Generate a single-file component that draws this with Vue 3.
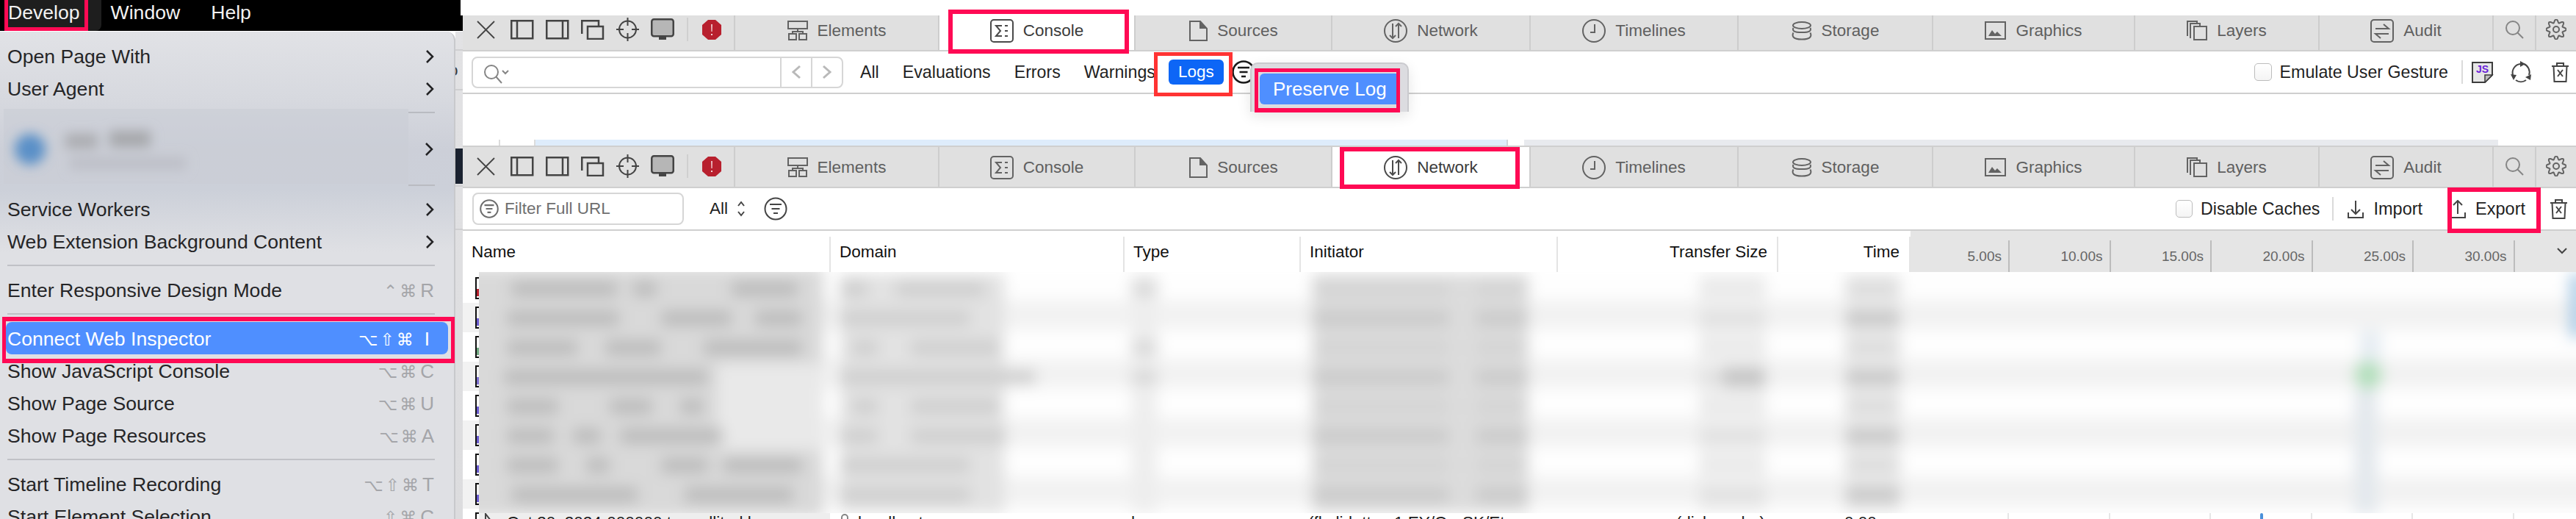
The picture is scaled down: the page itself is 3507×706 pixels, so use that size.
<script setup>
const menuA = ['Open Page With', 'User Agent']
const menuB = ['Service Workers', 'Web Extension Background Content']
const menuC = [
  { t: 'Connect Web Inspector', k: '⌥⇧⌘', l: 'I', on: true },
  { t: 'Show JavaScript Console', k: '⌥⌘', l: 'C' },
  { t: 'Show Page Source', k: '⌥⌘', l: 'U' },
  { t: 'Show Page Resources', k: '⌥⌘', l: 'A' },
]
const menuD = [
  { t: 'Start Timeline Recording', k: '⌥⇧⌘', l: 'T' },
  { t: 'Start Element Selection', k: '⇧⌘', l: 'C' },
]
const tabs = [
  { n: 'Elements', i: 'elements', w: 28, h: 27 },
  { n: 'Console', i: 'console', w: 32, h: 32 },
  { n: 'Sources', i: 'sources', w: 26, h: 28 },
  { n: 'Network', i: 'network', w: 32, h: 32 },
  { n: 'Timelines', i: 'timelines', w: 32, h: 32 },
  { n: 'Storage', i: 'storage', w: 28, h: 26 },
  { n: 'Graphics', i: 'graphics', w: 29, h: 25 },
  { n: 'Layers', i: 'layers', w: 28, h: 27 },
  { n: 'Audit', i: 'audit', w: 32, h: 32 },
]
const ticks = ['5.00s', '10.00s', '15.00s', '20.00s', '25.00s', '30.00s']
const fileColors = ['#b8202e', '#6a5bd0', '#6fa77f', '#7c6fd0', '#6a5bd0', '#6a5bd0', '#6a5bd0', '#6a5bd0', '#6a5bd0']

const gear = (() => {
  const pts = []
  for (let i = 0; i < 96; i++) {
    const a = (i / 96) * Math.PI * 2
    const r = 11.5 + 2.2 * Math.cos(8 * a)
    pts.push((14 + r * Math.sin(a)).toFixed(2) + ' ' + (14 - r * Math.cos(a)).toFixed(2))
  }
  return 'M' + pts.join('L') + 'Z'
})()

// Blurred table content, in page coordinates
const centre = (i) => 393 + 40 * i
const bar = (x1, x2, i, fill, h = 20) => ({ x: x1, width: x2 - x1, y: centre(i) - h / 2, height: h, fill })
const nameRuns = [
  [[696, 840], [862, 894], [996, 1086]],
  [[690, 843], [900, 996], [1028, 1092]],
  [[690, 786], [824, 900], [958, 1092]],
  [[686, 964]],
  [[690, 760], [830, 888], [926, 958]],
  [[690, 754], [780, 818], [844, 984]],
  [[690, 760], [798, 830], [900, 964], [984, 1092]],
  [[696, 868], [932, 1080]],
]
const domainRuns = [
  [[1143, 1180], [1220, 1340]], [[1143, 1320]], [[1160, 1195], [1240, 1360]], [[1143, 1410]],
  [[1160, 1195], [1240, 1360]], [[1143, 1195], [1240, 1370]], [[1143, 1320]], [[1143, 1320]],
]
const blurRects = []
for (let i = 0; i < 9; i++) {
  blurRects.push({ x: 600, width: 2960, y: 372 + 40 * i - 4, height: 40, fill: i % 2 ? '#f2f2f2' : '#fefefe' })
}
blurRects.push({ x: 600, width: 522, y: 364, height: 340, fill: '#d9d9d9' })
blurRects.push({ x: 977, width: 145, y: 495, height: 117, fill: '#e9e9e9' })
blurRects.push({ x: 1143, width: 225, y: 372, height: 326, fill: '#e2e2e2' })
blurRects.push({ x: 1540, width: 36, y: 372, height: 326, fill: '#eeeeee' })
blurRects.push({ x: 1786, width: 295, y: 372, height: 326, fill: '#dcdcdc' })
blurRects.push({ x: 2313, width: 91, y: 372, height: 326, fill: '#efefef' })
blurRects.push({ x: 2512, width: 75, y: 372, height: 326, fill: '#e8e8e8' })
nameRuns.forEach((row, i) => row.forEach(([a, b]) => blurRects.push(bar(a, b, i, '#b9b9b9'))))
domainRuns.forEach((row, i) => row.forEach(([a, b]) => blurRects.push(bar(a, b, i, '#cecece'))))
;[0, 2, 3].forEach((i) => blurRects.push(bar(1540, 1576, i, '#d8d8d8')))
for (let i = 0; i < 8; i++) {
  const strong = i % 2 === 1
  blurRects.push(bar(1786, 1972, i, strong ? '#c9c9c9' : '#d4d4d4'))
  blurRects.push(bar(2010, 2081, i, strong ? '#c9c9c9' : '#d4d4d4'))
  blurRects.push(bar(2313, 2404, i, strong ? '#e0e0e0' : '#eaeaea'))
  blurRects.push(bar(2512, 2587, i, strong ? '#c6c6c6' : '#dddddd'))
}
blurRects.push(bar(2345, 2404, 3, '#c6c6c6', 28))
blurRects.push({ x: 3212, width: 30, y: 450, height: 40, fill: '#e6edf3' })
blurRects.push({ x: 3205, width: 32, y: 530, height: 170, fill: '#e3e8ed' })
blurRects.push({ x: 3498, width: 20, y: 372, height: 88, fill: '#a5cbe6' })
</script>

<template>
  <div class="page">
    <svg class="defs" width="0" height="0" aria-hidden="true">
      <defs>
        <g id="i-elements"><rect x="1" y="1" width="26" height="10" /><rect x="2" y="18" width="10" height="8" /><rect x="16" y="18" width="10" height="8" /><path d="M14 11v4M7 18v-3h14v3" /></g>
        <g id="i-console"><rect x="1" y="1" width="30" height="30" rx="4" /><path d="M16 9H8l6 7-6 7h8M20 9h4M20 16h4M20 23h4" /></g>
        <g id="i-sources"><path d="M2 1h14l9 10v16H2z" /><path d="M15 1v10h10z" fill="currentColor" stroke="none" /></g>
        <g id="i-network"><circle cx="16" cy="16" r="15" /><path d="M12 6v20M8 22l4 4 4-4M20 26V6M16 10l4-4 4 4" /></g>
        <g id="i-timelines"><circle cx="16" cy="16" r="15" /><path d="M17 7v11h-6" /></g>
        <g id="i-storage"><ellipse cx="14" cy="5.5" rx="12" ry="4.5" /><path d="M2.5 9c-1.5 3.500 0 6 11.500 6s13-2.500 11.500-6M2.500 15.500c-2 4 -1.500 9 11.500 9s13.500-5 11.500-9" /></g>
        <g id="i-graphics"><rect x="1" y="1" width="27" height="23" /><path d="M5 20l5-8 4 5 3-3 6 6z" fill="currentColor" stroke="none" /></g>
        <g id="i-layers"><rect x="10" y="8" width="17" height="18" /><path d="M6 23H5V4h13v4M2 20H1V1h13v3" /></g>
        <g id="i-audit"><rect x="1" y="1" width="30" height="30" rx="4" /><path d="M7 13h18l-7-6M25 20H7l7 6" /></g>
        <g id="i-close"><path d="M1 1l23 23M24 1L1 24" /></g>
        <g id="i-dockl"><rect x="1.250" y="1.250" width="29" height="24" /><path d="M9 1v25" /></g>
        <g id="i-dockr"><rect x="1.250" y="1.250" width="29" height="24" /><path d="M23 1v25" /></g>
        <g id="i-undock"><rect x="9" y="9" width="21" height="17" /><path d="M1.250 19V1.250H24V9" /></g>
        <g id="i-target"><circle cx="15.500" cy="16" r="11.500" /><path d="M15.500 0v11M15.500 21v11M0 16h10M21 16h10" /></g>
        <g id="i-monitor"><rect x="1.250" y="1.250" width="29.500" height="23" rx="3" fill="#b6b6b6" /><path d="M11 24h10v5H11z" fill="currentColor" stroke="none" /></g>
        <g id="i-error"><path d="M8 0h10l8 7v13l-8 7H8l-8-7V7z" fill="#b8202e" stroke="none" /><path d="M12.300 6h1.400l-.2 10h-1zM12.200 19h1.600v2h-1.600z" fill="#fff" stroke="none" /></g>
        <g id="i-search"><circle cx="10" cy="10" r="9" /><path d="M16 16l8 8" /></g>
        <g id="i-gear"><path :d="gear" /><circle cx="14" cy="14" r="4" /></g>
        <g id="i-filter"><circle cx="16" cy="16" r="14.500" /><path d="M8 10h16M10.500 16h11M13 22h6" /></g>
        <g id="i-trash"><path d="M1 5h23M8 5V1h9v4M3.500 5l1 21h16l1-21M9 10l7 9M16 10l-7 9" /></g>
        <g id="i-import"><path d="M11 1v18M5 13l6 6 6-6M1 17v7h20v-7" /></g>
        <g id="i-export"><path d="M11 19V1M5 7l6-6 6 6M1 17v7h20v-7" /></g>
        <g id="i-chev"><path d="M2 2l8 8-8 8" /></g>
      </defs>
    </svg>

    <aside class="left">
      <header class="menubar">
        <span class="mb-item mb-on">Develop</span>
        <span class="mb-item">Window</span>
        <span class="mb-item">Help</span>
      </header>
      <div class="menu-wrap">
        <nav class="menu">
          <div v-for="t in menuA" :key="t" class="row">
            <span>{{ t }}</span>
            <svg class="ico chev" width="12" height="20" viewBox="0 0 12 20"><use href="#i-chev" /></svg>
          </div>
          <div class="account">
            <svg class="account-blur" width="551" height="102" viewBox="0 0 551 102">
              <defs>
                <filter id="acc" x="-20" y="-20" width="600" height="150" filterUnits="userSpaceOnUse"><feGaussianBlur stdDeviation="8" /></filter>
              </defs>
              <rect width="551" height="102" fill="#cacdd6" fill-opacity=".6" />
              <g filter="url(#acc)">
                <circle cx="36" cy="55" r="21" fill="#5a90c8" />
                <rect x="84" y="34" width="44" height="20" fill="#abacb0" />
                <rect x="144" y="30" width="56" height="22" fill="#a6a7ab" />
                <rect x="90" y="66" width="158" height="16" fill="#bcbec6" />
              </g>
            </svg>
            <div class="account-side">
              <i class="side-sep"></i>
              <svg class="ico chev" width="12" height="20" viewBox="0 0 12 20"><use href="#i-chev" /></svg>
              <i class="side-sep"></i>
            </div>
          </div>
          <div v-for="t in menuB" :key="t" class="row">
            <span>{{ t }}</span>
            <svg class="ico chev" width="12" height="20" viewBox="0 0 12 20"><use href="#i-chev" /></svg>
          </div>
          <i class="sep"></i>
          <div class="row">
            <span>Enter Responsive Design Mode</span>
            <span class="keys">⌃⌘<b>R</b></span>
          </div>
          <i class="sep"></i>
          <div v-for="m in menuC" :key="m.t" class="row" :class="{ 'row-on': m.on }">
            <span>{{ m.t }}</span>
            <span class="keys">{{ m.k }}<b>{{ m.l }}</b></span>
          </div>
          <i class="sep"></i>
          <div v-for="m in menuD" :key="m.t" class="row">
            <span>{{ m.t }}</span>
            <span class="keys">{{ m.k }}<b>{{ m.l }}</b></span>
          </div>
        </nav>
        <div class="strip"><span>o</span></div>
      </div>
    </aside>

    <main class="tools-area">
      <div class="top-white"></div>

      <!-- Console inspector -->
      <div class="clip">
        <div class="tabbar">
          <div class="tools">
            <svg class="ico dark close" width="25" height="25" viewBox="0 0 25 25"><use href="#i-close" /></svg>
            <svg class="ico dark thick" width="32" height="27" viewBox="0 0 32 27"><use href="#i-dockl" /></svg>
            <svg class="ico dark thick" width="32" height="27" viewBox="0 0 32 27"><use href="#i-dockr" /></svg>
            <svg class="ico dark thick" width="32" height="27" viewBox="0 0 32 27"><use href="#i-undock" /></svg>
            <svg class="ico dark" width="31" height="32" viewBox="0 0 31 32"><use href="#i-target" /></svg>
            <svg class="ico dark thick" width="32" height="30" viewBox="0 0 32 30"><use href="#i-monitor" /></svg>
            <i class="tool-sep"></i>
            <svg class="ico" width="26" height="27" viewBox="0 0 26 27"><use href="#i-error" /></svg>
          </div>
          <div v-for="t in tabs" :key="t.n" class="tab" :class="{ 'tab-on': t.n === 'Console' }">
            <svg class="ico" :width="t.w" :height="t.h" :viewBox="`0 0 ${t.w} ${t.h}`"><use :href="`#i-${t.i}`" /></svg>
            <span>{{ t.n }}</span>
          </div>
          <div class="tab tab-mini"><svg class="ico gray" width="25" height="25" viewBox="0 0 25 25"><use href="#i-search" /></svg></div>
          <div class="tab tab-mini last"><svg class="ico" width="28" height="28" viewBox="0 0 28 28"><use href="#i-gear" /></svg></div>
        </div>
      </div>
      <div class="rule"></div>
      <div class="toolbar">
        <div class="searchbox">
          <svg class="ico gray search-i" width="34" height="26" viewBox="0 0 34 26"><circle cx="10" cy="10" r="9" /><path d="M16 16l8 9M25 8l4 4 4-4" /></svg>
          <span class="pager"><svg class="ico pale" width="14" height="20" viewBox="0 0 14 20"><path d="M12 2l-9 8 9 8" stroke-width="3" /></svg></span>
          <span class="pager"><svg class="ico pale" width="14" height="20" viewBox="0 0 14 20"><path d="M2 2l9 8-9 8" stroke-width="3" /></svg></span>
        </div>
        <nav class="scopes">
          <span>All</span><span>Evaluations</span><span>Errors</span><span>Warnings</span>
        </nav>
        <span class="pill">Logs</span>
        <svg class="ico black filter-a" width="32" height="32" viewBox="0 0 32 32"><use href="#i-filter" /></svg>
        <div class="tb-right tb-right-a">
          <i class="check"></i>
          <span class="check-l">Emulate User Gesture</span>
          <i class="bar"></i>
          <svg class="jsdoc" width="30" height="29" viewBox="0 0 30 29">
            <path d="M1 1h27v17l-10 10H1z" fill="#e6e6e6" stroke="#3d3d3d" stroke-width="2" />
            <path d="M18 28V18h10z" fill="#bdbdbd" stroke="#3d3d3d" stroke-width="1.500" />
            <text x="6" y="15" class="js">JS</text>
          </svg>
          <svg class="ico dark thick recycle" width="30" height="30" viewBox="0 0 30 30">
            <path d="M14 4A12 12 0 0 0 4 19M8 26a12 12 0 0 0 14 0M26 19A12 12 0 0 0 19 4" stroke-width="2" />
            <path d="M14 0l7 4-7 4zM1 18l8 1-4 7zM29 18l-1 8-7-4z" fill="currentColor" stroke="none" />
          </svg>
          <svg class="ico dark" width="25" height="27" viewBox="0 0 25 27"><use href="#i-trash" /></svg>
        </div>
      </div>
      <div class="rule"></div>
      <div class="blank"></div>
      <div class="band"><i class="b-w"></i><i class="b-w2"></i><i class="b-blue"></i><i class="b-w3"></i><i class="b-gray"></i><i class="b-w4"></i></div>

      <!-- Network inspector -->
      <div class="rule"></div>
      <div class="tabbar">
        <div class="tools">
          <svg class="ico dark close" width="25" height="25" viewBox="0 0 25 25"><use href="#i-close" /></svg>
          <svg class="ico dark thick" width="32" height="27" viewBox="0 0 32 27"><use href="#i-dockl" /></svg>
          <svg class="ico dark thick" width="32" height="27" viewBox="0 0 32 27"><use href="#i-dockr" /></svg>
          <svg class="ico dark thick" width="32" height="27" viewBox="0 0 32 27"><use href="#i-undock" /></svg>
          <svg class="ico dark" width="31" height="32" viewBox="0 0 31 32"><use href="#i-target" /></svg>
          <svg class="ico dark thick" width="32" height="30" viewBox="0 0 32 30"><use href="#i-monitor" /></svg>
          <i class="tool-sep"></i>
          <svg class="ico" width="26" height="27" viewBox="0 0 26 27"><use href="#i-error" /></svg>
        </div>
        <div v-for="t in tabs" :key="t.n" class="tab" :class="{ 'tab-on': t.n === 'Network' }">
          <svg class="ico" :width="t.w" :height="t.h" :viewBox="`0 0 ${t.w} ${t.h}`"><use :href="`#i-${t.i}`" /></svg>
          <span>{{ t.n }}</span>
        </div>
        <div class="tab tab-mini"><svg class="ico gray" width="25" height="25" viewBox="0 0 25 25"><use href="#i-search" /></svg></div>
        <div class="tab tab-mini last"><svg class="ico" width="28" height="28" viewBox="0 0 28 28"><use href="#i-gear" /></svg></div>
      </div>
      <div class="rule"></div>
      <div class="toolbar">
        <div class="filterbox">
          <svg class="ico dim" width="26" height="26" viewBox="0 0 32 32"><use href="#i-filter" /></svg>
          <span>Filter Full URL</span>
        </div>
        <span class="all-s">All</span>
        <svg class="ico dark updown" width="10" height="22" viewBox="0 0 10 22"><path d="M1 7l4-5 4 5M1 15l4 5 4-5" /></svg>
        <svg class="ico dark filter-b" width="32" height="32" viewBox="0 0 32 32"><use href="#i-filter" /></svg>
        <div class="tb-right tb-right-b">
          <i class="check check-b"></i>
          <span class="check-l">Disable Caches</span>
          <i class="bar bar-b"></i>
          <svg class="ico dark" width="22" height="25" viewBox="0 0 22 25"><use href="#i-import" /></svg>
          <span class="btn-l">Import</span>
          <svg class="ico dark exp" width="22" height="25" viewBox="0 0 22 25"><use href="#i-export" /></svg>
          <span class="btn-l">Export</span>
          <svg class="ico dark trash-b" width="25" height="27" viewBox="0 0 25 27"><use href="#i-trash" /></svg>
        </div>
      </div>
      <div class="rule"></div>
      <div class="thead">
        <div class="th"><span>Name</span></div>
        <div class="th"><span>Domain</span></div>
        <div class="th"><span>Type</span></div>
        <div class="th"><span>Initiator</span></div>
        <div class="th th-r"><span>Transfer Size</span></div>
        <div class="th th-r"><span>Time</span></div>
        <div class="timeline">
          <div v-for="t in ticks" :key="t" class="tick">{{ t }}</div>
          <div class="caret"><svg class="ico dark" width="14" height="9" viewBox="0 0 14 9"><path d="M1 1l6 6 6-6" /></svg></div>
        </div>
      </div>
      <div class="list">
        <div class="gutter">
          <div v-for="(c, i) in fileColors" :key="i" class="g-row" :class="{ 'g-alt': i % 2 }">
            <i class="fileicon"><b :style="{ background: c }"></b></i>
          </div>
        </div>
        <div class="list-main">
          <svg class="blurred" width="2855" height="328" viewBox="652 370 2855 328">
            <defs>
              <filter id="tbl" x="500" y="300" width="3100" height="480" filterUnits="userSpaceOnUse"><feGaussianBlur stdDeviation="10" /></filter>
            </defs>
            <g filter="url(#tbl)">
              <rect v-for="(r, i) in blurRects" :key="i" :x="r.x" :y="r.y" :width="r.width" :height="r.height" :fill="r.fill" />
              <circle cx="3224" cy="510" r="20" fill="#b4dfbd" />
            </g>
          </svg>
          <div class="lastrow">
            <div class="lc lc-name">
              <svg class="ico dark doc-s" width="14" height="20" viewBox="0 0 14 20"><path d="M1 20V1l11 14" /></svg>
              <span>Oct 30, 2024-000000 trace-llit-ekl</span>
            </div>
            <div class="lc lc-dom">
              <svg class="ico gray" width="14" height="14" viewBox="0 0 14 14"><path d="M3 14V6a4 4 0 0 1 8 0v8" /></svg>
              <span>localhost</span>
            </div>
            <div class="lc lc-type">h</div>
            <div class="lc lc-init">(fbclid=ttps-1.EY/Q=-SK/Et</div>
            <div class="lc lc-size">(disk cache)</div>
            <div class="lc lc-time">0.00</div>
            <div class="lc-tl"><i></i><i></i><i></i><i class="dot"></i><i></i><i></i></div>
          </div>
        </div>
      </div>
    </main>

    <!-- Overlays: popover and annotation boxes -->
    <div class="popup"><div class="pop-row">Preserve Log</div></div>
    <i class="mark m-develop"></i>
    <i class="mark m-connect"></i>
    <i class="mark m-console"></i>
    <i class="mark m-logs"></i>
    <i class="mark m-preserve"></i>
    <i class="mark m-network"></i>
    <i class="mark m-export"></i>
  </div>
</template>

<style>
html, body { margin: 0; background: #fff; }
</style>

<style scoped>
* { box-sizing: border-box; }
.page {
  position: relative;
  display: flex;
  width: 3507px;
  height: 706px;
  overflow: hidden;
  background: #fff;
  font-family: "Liberation Sans", "DejaVu Sans", sans-serif;
  font-size: 22.5px;
  color: #1f1f1f;
}
.defs { position: absolute; }
.ico { flex: none; display: block; fill: none; stroke: currentColor; stroke-width: 2; color: #636363; }
.ico.dark { color: #444; }
.ico.black { color: #1a1a1a; stroke-width: 2.500; }
.ico.thick { stroke-width: 2.500; }
.ico.close { stroke-width: 1.800; }
.ico.gray { color: #858585; }
.ico.dim { color: #6d6d6d; stroke-width: 2.500; }
.ico.pale { color: #b9b9b9; }

/* Left menu */
.left { flex: none; width: 630px; display: flex; flex-direction: column; }
.menubar {
  position: relative;
  display: flex;
  flex: none;
  height: 42px;
  background: #000;
  color: #f2f2f2;
  font-size: 26.600px;
  margin-bottom: 1px;
}
.menubar::after {
  content: "";
  position: absolute;
  right: 0;
  top: 0;
  width: 3px;
  height: 21px;
  background: #fff;
}
.mb-item { padding: 1px 21px 0 21px; line-height: 33px; }
.mb-on {
  background: #1e1e1e;
  margin-left: 6px;
  padding: 1px 29px 0 5px;
  border-radius: 0 0 8px 8px;
  margin-right: -8px;
}
.mb-on + .mb-item { margin-left: 0; }
.menu-wrap { flex: 1; display: flex; min-height: 0; }
.menu {
  flex: none;
  width: 620px;
  height: 663px;
  overflow: hidden;
  padding-top: 12px;
  border-right: 2px solid #c8c9cc;
  border-radius: 0 12px 0 0;
  background: linear-gradient(#e1e2e6 0, #d7d9df 90px, #cccfd8 160px, #ccd0d9 215px, #dfe0e4 300px, #dfe0e4 100%);
  font-size: 26.600px;
  color: #252527;
}
.row {
  display: flex;
  align-items: center;
  justify-content: space-between;
  height: 44px;
  padding: 0 27px 0 10px;
}
.row .chev { color: #232325; stroke-width: 2.500; }
.row-on {
  margin: -1px 8px 1px 8px;
  padding: 2px 19px 0 2px;
  background: #4f8fff;
  border-radius: 8px;
  color: #fff;
}
.keys {
  color: #a4a5a9;
  font-family: "DejaVu Sans", sans-serif;
  font-size: 23px;
  letter-spacing: 3px;
  white-space: nowrap;
}
.keys b { font-family: "Liberation Sans", sans-serif; font-weight: 400; font-size: 26px; letter-spacing: 0; margin-left: 2px; }
.row-on .keys { color: #fff; }
.row-on .keys b { margin-left: 12px; margin-right: 6px; }
.sep { display: block; height: 2px; margin: 9px 26px 11px 10px; background: #c0c1c6; }
.account { display: flex; height: 120px; padding: 9px 26px 0 5px; }
.account-blur { flex: none; margin-top: -4px; }
.account-side { flex: none; width: 36px; height: 101px; display: flex; flex-direction: column; justify-content: space-between; align-items: flex-end; }
.account-side .chev { color: #232325; stroke-width: 2.500; margin-right: 2px; }
.side-sep { display: block; width: 36px; height: 2px; background: #b9bbc1; }
.strip {
  flex: none;
  width: 10px;
  height: 663px;
  overflow: hidden;
  padding-top: 40px;
  line-height: 26px;
  color: #3a3a3a;
  background:
    linear-gradient(#1a2230, #1a2230) 0 159px / 100% 48px no-repeat,
    linear-gradient(#cfcfd1, #cfcfd1) 0 24px / 100% 2px no-repeat,
    linear-gradient(#cfcfd1, #cfcfd1) 0 78px / 100% 2px no-repeat,
    linear-gradient(#cfcfd1, #cfcfd1) 0 209px / 100% 2px no-repeat,
    linear-gradient(#cfcfd1, #cfcfd1) 0 268px / 100% 2px no-repeat,
    linear-gradient(#e2e2e4, #dcdcde);
}
.strip span { display: block; margin-left: -9px; }

/* Inspector */
.tools-area { flex: none; width: 2877px; display: flex; flex-direction: column; }
.top-white { flex: none; height: 21px; }
.clip { flex: none; height: 47px; overflow: hidden; }
.clip .tabbar { margin-top: -7px; }
.rule { flex: none; height: 2px; background: #cfcfcf; }
.tabbar {
  flex: none;
  display: grid;
  grid-template-columns: 371px 278px 267px 268px 270px 283px 265px 275px 251px 237px 58px 54px;
  height: 54px;
  background: #e0e0e0;
}
.tools {
  display: flex;
  align-items: center;
  gap: 16px;
  padding: 0 0 2px 19px;
  border-right: 2px solid #cdcdcd;
}
.tools .close { margin-right: 5px; }
.tool-sep { display: block; width: 2px; height: 32px; background: #cfcfcf; margin: 0 3px 0 1px; }
.tab {
  display: flex;
  align-items: center;
  justify-content: center;
  gap: 13px;
  padding-top: 1px;
  border-right: 2px solid #cdcdcd;
  color: #5f5f5f;
  white-space: nowrap;
}
.tab-on { background: #fff; color: #3b3b3b; }
.tab-on .ico { color: #4a4a4a; }
.tab-mini { padding: 0 0 2px; }
.tab.last { border-right: 0; }
.toolbar { flex: none; display: flex; align-items: center; height: 56px; white-space: nowrap; }
.searchbox {
  flex: none;
  display: flex;
  align-items: center;
  width: 506px;
  height: 43px;
  margin-left: 12px;
  border: 2px solid #d6d6d6;
  border-radius: 8px;
  overflow: hidden;
}
.search-i { margin: 5px auto 0 15px; }
.pager { display: flex; align-items: center; justify-content: center; width: 42px; height: 100%; border-left: 2px solid #d6d6d6; }
.scopes { display: flex; gap: 32px; margin-left: 23px; font-size: 23.200px; }
.pill {
  flex: none;
  margin-left: 18px;
  padding: 0 13px;
  height: 34px;
  line-height: 33px;
  border-radius: 6px;
  background: #0d66f6;
  color: #fff;
}
.filter-a { margin-left: 11px; }
.tb-right { display: flex; align-items: center; margin-left: auto; }
.tb-right-a { margin-right: 9px; }
.tb-right-b { margin-right: 11px; }
.check {
  display: block;
  width: 24px;
  height: 24px;
  border: 1.500px solid #bcbcbc;
  border-radius: 5px;
  background: linear-gradient(#fff, #f4f4f4);
  margin-right: 11px;
}
.check-b { width: 23px; }
.check-l { font-size: 23.200px; }
.bar { display: block; width: 2px; height: 32px; background: #dadada; margin: 0 12px 0 18px; }
.bar-b { margin: 0 19px 0 17px; }
.jsdoc { display: block; flex: none; }
.js { font: 700 14px "Liberation Sans", sans-serif; fill: #6a22d8; }
.recycle { margin: 0 26px 0 22px; }
.filterbox {
  flex: none;
  display: flex;
  align-items: center;
  gap: 8px;
  width: 288px;
  height: 44px;
  margin-left: 13px;
  padding-left: 8px;
  border: 2px solid #d6d6d6;
  border-radius: 8px;
  color: #6f6f6f;
}
.all-s { margin-left: 35px; }
.updown { margin-left: 13px; }
.filter-b { margin-left: 26px; }
.btn-l { margin-left: 13px; font-size: 23.500px; }
.exp { margin-left: 37px; }
.trash-b { margin-left: 33px; }
.blank { flex: none; height: 62px; }
.band { flex: none; display: grid; grid-template-columns: 51px 48px 1324px 22px 1326px 106px; height: 8px; }
.band i { display: block; }
.b-w2, .b-w { border-right: 2px solid #dcdcdc; }
.b-blue { background: #deecfb; border-right: 2px solid #cdd3da; }
.b-gray { background: #e8eaee; }

/* Table */
.thead {
  flex: none;
  display: grid;
  grid-template-columns: 501px 400px 240px 350px 300px 180px 906px;
  height: 56px;
}
.th {
  display: flex;
  align-items: center;
  height: 48px;
  margin-top: 8px;
  padding: 0 0 6px 12px;
  border-right: 2px solid #e4e4e4;
  color: #111;
}
.th-r { justify-content: flex-end; padding: 0 13px 6px 0; }
.timeline {
  display: grid;
  grid-template-columns: 135px repeat(5, 137.500px) 1fr;
  background: #e5e5e5;
  padding-top: 13px;
}
.tick {
  display: flex;
  align-items: center;
  justify-content: flex-end;
  padding-right: 9px;
  border-right: 2px solid #bcbcbc;
  color: #666;
  font-size: 19px;
}
.caret { display: flex; justify-content: flex-end; align-items: center; padding: 0 12px 14px 0; }
.list { flex: 1; min-height: 0; display: flex; overflow: hidden; }
.gutter { flex: none; width: 22px; padding-top: 2px; }
.g-row { height: 40px; padding: 5px 0 0 17px; }
.g-alt { background: #f2f2f2; }
.fileicon {
  display: block;
  position: relative;
  width: 5px;
  height: 30px;
  border: 2px solid #111;
  border-right: 0;
  overflow: hidden;
}
.fileicon b { display: block; width: 3px; height: 10px; margin-top: 14px; }
.list-main { flex: 1; min-width: 0; display: flex; flex-direction: column; }
.blurred { display: block; flex: none; }
.lastrow {
  flex: none;
  display: grid;
  grid-template-columns: 478px 400px 240px 350px 300px 180px 906px;
  height: 8px;
  overflow: hidden;
  line-height: 26px;
  color: #1a1a1a;
}
.lc { white-space: nowrap; height: 26px; }
.lc-name { display: flex; gap: 16px; background: #eee; padding-left: 8px; }
.lc-dom { display: flex; gap: 11px; padding-left: 13px; }
.lc-type { padding-left: 10px; }
.lc-init { padding-left: 11px; }
.lc-size { text-align: right; padding-right: 17px; }
.lc-time { padding-left: 91px; }
.lc-tl { display: grid; grid-template-columns: 135px repeat(5, 137.500px); height: 8px; }
.lc-tl i { display: block; border-right: 2px solid #e6e6e6; position: relative; }
.lc-tl i.dot::after {
  content: "";
  position: absolute;
  left: 67px;
  top: 0;
  width: 4px;
  height: 8px;
  background: #4a90d9;
  border-radius: 2px 2px 0 0;
}

/* Overlays */
.popup {
  position: absolute;
  left: 1702px;
  top: 85px;
  width: 216px;
  height: 67px;
  padding: 13px 10px 0 11px;
  background: #dcdce0;
  border: 2px solid #cacace;
  border-bottom: 0;
  border-radius: 10px 10px 0 0;
  box-shadow: 0 6px 18px rgba(0, 0, 0, .10);
}
.pop-row {
  height: 42px;
  line-height: 42px;
  padding-left: 18px;
  border-radius: 6px;
  background: #4f8fff;
  color: #fff;
  font-size: 26px;
  white-space: nowrap;
}
.mark { position: absolute; display: block; border: 6px solid #ff0a54; pointer-events: none; }
.m-develop { left: 6px; top: -8px; width: 114px; height: 50px; border-width: 5px; }
.m-connect { left: 3px; top: 431px; width: 616px; height: 63px; border-width: 6px 5px; }
.m-console { left: 1291px; top: 13px; width: 246px; height: 60px; }
.m-logs { left: 1571px; top: 71px; width: 107px; height: 60px; border: 5px solid #ff3333; }
.m-preserve { left: 1708px; top: 93px; width: 198px; height: 60px; border-width: 5px 5px 6px; }
.m-network { left: 1824px; top: 200px; width: 245px; height: 57px; }
.m-export { left: 3332px; top: 255px; width: 127px; height: 62px; }
</style>
